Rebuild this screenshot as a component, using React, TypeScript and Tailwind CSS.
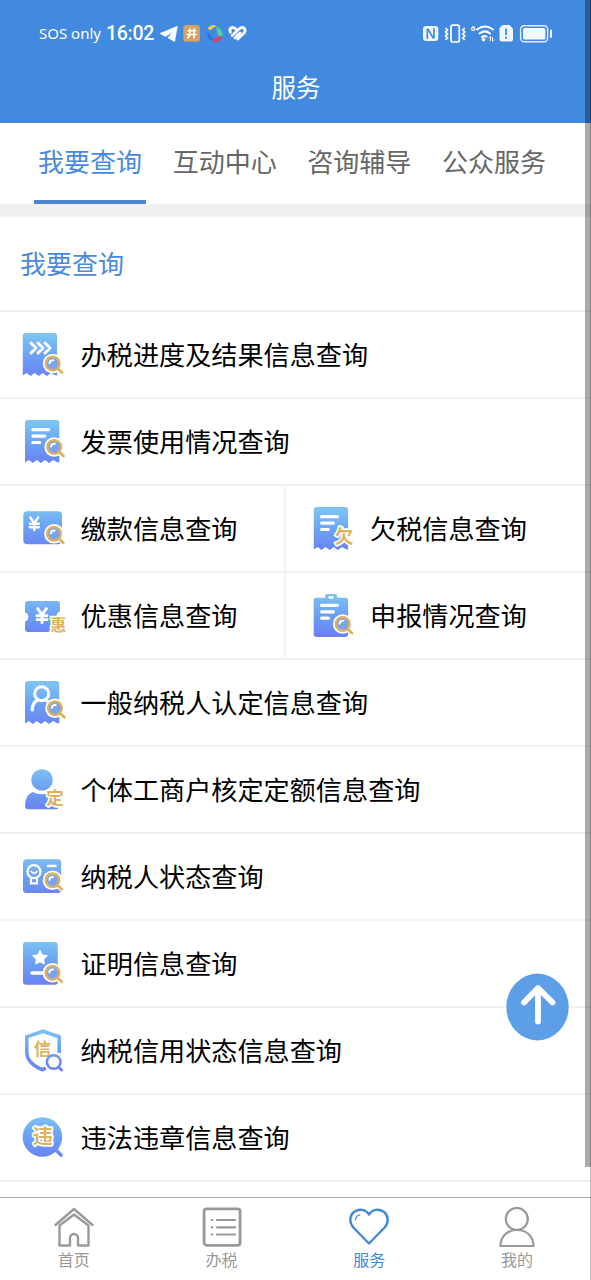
import type { ReactNode } from 'react';
import clsx from 'clsx';

const BLUE = 'url(#blue)';
const GOLD = '#e0b25f';

const GradientDefs = () => (
    <svg className="absolute size-0" aria-hidden="true">
        <defs>
            <linearGradient id="blue" gradientUnits="userSpaceOnUse" x1="22" y1="3" x2="22" y2="46">
                <stop offset="0" stopColor="#7cc3f2" />
                <stop offset="0.5" stopColor="#6b9ff4" />
                <stop offset="1" stopColor="#6a80f3" />
            </linearGradient>
        </defs>
    </svg>
);

const Icon = ({ children }: { children: ReactNode }) => (
    <svg className="h-[49px] w-12 shrink-0" viewBox="0 0 48 49" fill="none">
        {children}
    </svg>
);

const Magnifier = ({ x, y }: { x: number; y: number }) => (
    <g transform={`translate(${x} ${y})`} strokeLinecap="round">
        <circle r="9.8" fill="#fff" />
        <path d="M5.5 5.5 9.3 9" stroke="#fff" strokeWidth="5" />
        <circle r="6.9" fill="#7ba3ee" stroke={GOLD} strokeWidth="2.3" />
        <path d="M5.5 5.5 9.3 9" stroke={GOLD} strokeWidth="2.8" />
        <path d="M-3.2-.4A3.4 3.4 0 0 1 .6-3.2" stroke="#fff" strokeWidth="2" />
    </g>
);

const Receipt = ({ x = 5 }: { x?: number }) => (
    <path
        transform={`translate(${x} 3)`}
        fill={BLUE}
        d="M3 0h28.3a3 3 0 0 1 3 3v39.5l-2.6-.6-3.5-2-4.2 3-4-3-4.1 3-4.1-3-4 3-4-3L0 42.6V3a3 3 0 0 1 3-3z"
    />
);

const Lines = ({ x, y, widths }: { x: number; y: number; widths: number[] }) => (
    <g stroke="#fff" strokeWidth="3.2" strokeLinecap="round">
        {widths.map((w, i) => (
            <path key={i} d={`M${x + 1.6} ${y + i * 6.4}h${w - 3.2}`} />
        ))}
    </g>
);

const Yen = ({ x, y, scale = 1 }: { x: number; y: number; scale?: number }) => (
    <path
        transform={`translate(${x} ${y}) scale(${scale})`}
        d="M-3.8-6 0-.5 3.8-6M0-.5V6.3M-4.4.2h8.8M-4.4 3.6h8.8"
        stroke="#fff"
        strokeWidth="2.5"
        strokeLinecap="round"
    />
);

const Stamp = ({ x, y, size, children }: { x: number; y: number; size: number; children: string }) => (
    <text
        className="font-['Noto_Sans_CJK_SC',sans-serif] font-bold"
        x={x}
        y={y}
        fontSize={size}
        textAnchor="middle"
        fill={GOLD}
        stroke="#fff"
        strokeWidth="3.4"
        strokeLinejoin="round"
        paintOrder="stroke"
    >
        {children}
    </text>
);

const ProgressIcon = () => (
    <Icon>
        <Receipt x={2.8} />
        <path
            d="m11 13 5 5-5 5m7-10 5 5-5 5m7-10 5 5-5 5"
            stroke="#fff"
            strokeWidth="3"
            strokeLinecap="round"
            strokeLinejoin="round"
        />
        <Magnifier x={32.7} y={33.5} />
    </Icon>
);

const InvoiceIcon = () => (
    <Icon>
        <Receipt />
        <Lines x={11.3} y={12.7} widths={[19, 15, 10]} />
        <Magnifier x={34.2} y={30} />
    </Icon>
);

const PaymentIcon = () => (
    <Icon>
        <rect x="3.3" y="7.3" width="38.7" height="33" rx="4" fill={BLUE} />
        <Yen x={14.3} y={19.6} />
        <Magnifier x={34} y={29.7} />
    </Icon>
);

const DiscountIcon = () => (
    <Icon>
        <path
            d="M8 10h29a3 3 0 0 1 3 3v7.5c-4.5.5-4.5 9.5 0 10V38a3 3 0 0 1-3 3H8a3 3 0 0 1-3-3v-7.5c4.5-.5 4.5-8.500 0-9V13a3 3 0 0 1 3-3z"
            fill={BLUE}
        />
        <Yen x={22} y={24.5} scale={1.15} />
        <Stamp x={38.2} y={39.8} size={16}>惠</Stamp>
    </Icon>
);

const ArrearsIcon = () => (
    <Icon>
        <Receipt x={3.8} />
        <Lines x={10} y={12.7} widths={[19, 15, 10]} />
        <Stamp x={34} y={38.6} size={18.5}>欠</Stamp>
    </Icon>
);

const DeclareIcon = () => (
    <Icon>
        <path
            d="M6.5 6.7H15V5a2 2 0 0 1 2-2h8a2 2 0 0 1 2 2v1.7h8.3a2.8 2.8 0 0 1 2.8 2.8V43a3 3 0 0 1-3 3H6.7a3 3 0 0 1-3-3V9.5a2.8 2.8 0 0 1 2.8-2.8z"
            fill={BLUE}
        />
        <rect x="18.5" y="5.2" width="5" height="2.6" rx="1" fill="#fff" />
        <Lines x={10} y={14.4} widths={[19, 15, 10]} />
        <Magnifier x={32.7} y={33} />
    </Icon>
);

const TaxpayerIcon = () => (
    <Icon>
        <Receipt />
        <circle cx="21.7" cy="15.7" r="7" stroke="#fff" strokeWidth="3" />
        <path d="M12.2 32c.2-5.5 2.500-8.500 5.500-10M25.500 22l3 2" stroke="#fff" strokeWidth="3.2" strokeLinecap="round" />
        <Magnifier x={35} y={30.3} />
    </Icon>
);

const QuotaIcon = () => (
    <Icon>
        <circle cx="22" cy="14.9" r="10.7" fill={BLUE} />
        <path
            d="M13 27c5.500 3 12.500 3 18 0 5.500 1.500 8 6.500 8 14.200a3 3 0 0 1-3 3H8a3 3 0 0 1-3-3C5 33 8.500 28.500 13 27z"
            fill={BLUE}
        />
        <Stamp x={35} y={39.4} size={17.5}>定</Stamp>
    </Icon>
);

const StatusIcon = () => (
    <Icon>
        <rect x="3" y="7.3" width="38.2" height="33.7" rx="3.5" fill={BLUE} />
        <g stroke="#fff" strokeLinecap="round">
            <circle cx="14" cy="19.7" r="6.5" strokeWidth="2.3" />
            <path d="M11.2 19.5q2.800 3.600 5.600 0" strokeWidth="1.8" />
            <path d="M11 27v4.300h6V27" strokeWidth="2.2" />
            <path d="M28 14h7.5" strokeWidth="2.6" />
        </g>
        <Magnifier x={32.5} y={28.2} />
    </Icon>
);

const CertificateIcon = () => (
    <Icon>
        <rect x="3" y="3" width="34.8" height="42.8" rx="3" fill={BLUE} />
        <path
            d="m20 11.700 2.200 4.300 4.800.7-3.500 3.400.8 4.700-4.300-2.200-4.300 2.200.8-4.700-3.500-3.400 4.800-.7z"
            fill="#fff"
            stroke="#fff"
            strokeWidth="1.2"
            strokeLinejoin="round"
        />
        <path d="M12 34h12" stroke="#fff" strokeWidth="3.4" strokeLinecap="round" />
        <Magnifier x={32.5} y={33.7} />
    </Icon>
);

const CreditIcon = () => (
    <Icon>
        <path
            d="M39.2 27V10.7L23 5.2 6.800 10.700V26c0 8.500 6 13.800 15.500 17.700l3.500-1.700"
            stroke={BLUE}
            strokeWidth="3.6"
        />
        <Stamp x={22.5} y={28.5} size={17.5}>信</Stamp>
        <circle cx="33.7" cy="36" r="6.8" fill="#fff" stroke={BLUE} strokeWidth="2.6" />
        <path d="m38.500 41 3 3" stroke={BLUE} strokeWidth="3" strokeLinecap="round" />
    </Icon>
);

const ViolationIcon = () => (
    <Icon>
        <circle cx="22.4" cy="24" r="19.8" fill={BLUE} />
        <path d="m35 36 6 6" stroke={BLUE} strokeWidth="3.6" strokeLinecap="round" />
        <Stamp x={22.8} y={31.3} size={20}>违</Stamp>
    </Icon>
);

const rows = [
    [{ label: '办税进度及结果信息查询', icon: <ProgressIcon /> }],
    [{ label: '发票使用情况查询', icon: <InvoiceIcon /> }],
    [
        { label: '缴款信息查询', icon: <PaymentIcon /> },
        { label: '欠税信息查询', icon: <ArrearsIcon /> },
    ],
    [
        { label: '优惠信息查询', icon: <DiscountIcon /> },
        { label: '申报情况查询', icon: <DeclareIcon /> },
    ],
    [{ label: '一般纳税人认定信息查询', icon: <TaxpayerIcon /> }],
    [{ label: '个体工商户核定定额信息查询', icon: <QuotaIcon /> }],
    [{ label: '纳税人状态查询', icon: <StatusIcon /> }],
    [{ label: '证明信息查询', icon: <CertificateIcon /> }],
    [{ label: '纳税信用状态信息查询', icon: <CreditIcon /> }],
    [{ label: '违法违章信息查询', icon: <ViolationIcon /> }],
];

const tabs = ['我要查询', '互动中心', '咨询辅导', '公众服务'];

const navItems = [
    {
        label: '首页',
        icon: (
            <>
                <path d="M1.500 18 20 2l18.500 16" strokeWidth="2.4" />
                <path d="M5.500 18.500V38.500H16V31a4 4 0 0 1 8 0v7.500h10.500v-20L20 7.500z" strokeWidth="2.4" />
            </>
        ),
    },
    {
        label: '办税',
        icon: (
            <>
                <rect x="2.1" y="1.8" width="36" height="36.5" rx="2.5" strokeWidth="2.8" />
                <path d="M15 13h18M15 20.300h18M15 27.500h18M9.800 13h.5M9.800 20.300h.5M9.800 27.500h.5" strokeWidth="2.2" />
            </>
        ),
    },
    {
        label: '服务',
        icon: (
            <>
                <path
                    d="M20 36.500 4.800 21C-.5 15 .8 8 5.200 4.800 10 1.500 16.500 2 20 7.500 23.500 2 30 1.500 34.800 4.800 39.200 8 40.500 15 35.200 21z"
                    strokeWidth="2.4"
                />
                <path d="M6.500 12.800a5.500 5.500 0 0 1 4.300-5" strokeWidth="1.2" />
            </>
        ),
    },
    {
        label: '我的',
        icon: (
            <>
                <circle cx="19.8" cy="12" r="11" strokeWidth="2.2" />
                <path d="M3.500 39h33c0-9.500-6.500-16-16.500-16S3.500 29.500 3.500 39z" strokeWidth="2.2" />
            </>
        ),
    },
];

const StatusBar = () => (
    <div className="flex h-[67px] items-center pl-[39px] pr-[38px] text-white">
        <span className="w-[67px] whitespace-nowrap font-['Noto_Sans',sans-serif] text-[15px]">SOS only</span>
        <span className="w-[54px] font-['Roboto',sans-serif] text-[19.5px] font-medium tracking-[-0.3px]">16:02</span>
        <svg className="h-5 w-[88px]" viewBox="160 24 88 20" fill="none">
            <path d="M160 33.500 177.300 26.300 174.600 41.500l-6.600-3.700 5-6.300-7.500 5z" fill="#fff" stroke="#fff" strokeWidth=".6" strokeLinejoin="round" />
            <rect x="183.3" y="25" width="16.6" height="16.7" rx="3" fill="#d1a264" />
            <path
                d="M187.200 30.800h9M186.500 34.500h10.500M189.800 28.200v5.500q0 3.200-2.500 4.500M194 28.200v10.300"
                stroke="#fff"
                strokeWidth="1.5"
            />
            <path d="M207.500 28.500q2.500-4 7-3.500l2.500 1.500q-4 .5-6.500 4z" fill="#f3c65b" />
            <path d="M216.500 26q6.500 3 6.300 9.500l-3.300 1.500q-3.500-4.500-3-11z" fill="#4fcf9c" />
            <path d="M222.500 36q-2 6-8.500 6.300l-1-2.300q3-3.500 9.500-4z" fill="#e83c5d" />
            <path d="M207.500 30q-1.500 7.500 4 11l2.500-2.500q-4.500-3-6.500-8.500z" fill="#3470e8" />
            {/* striped heart */}
            <g stroke="#fff" strokeWidth="2.8" strokeLinecap="round">
                <path d="M230.500 32.300q-1.500-3.300.8-4.500 2.200-1 4.500 1.200" />
                <path d="m232.300 35.500 6.700-6.500q3-2.700 5.300-.6 1.900 2.300-.8 5.100l-5.700 5.600" />
                <path d="m235 38 5-5" />
            </g>
        </svg>
        <svg className="ml-auto h-[22px] w-[131px]" viewBox="422 23 131 22" fill="none">
            <rect x="423" y="26" width="15.3" height="15" rx="3" fill="#f0f6fd" />
            <path
                d="M427.300 39V30q0-1.500 1.200-.3l4.300 7.800q1.200 1.200 1.200-.3V28"
                stroke="#428ae0"
                strokeWidth="1.7"
            />
            <rect x="451" y="25.2" width="8.3" height="16.8" rx="2" stroke="#fff" strokeWidth="1.7" />
            <path
                d="m445.500 28 2 2-2 2 2 2-2 2 2 2-2 2M464.800 28l-2 2 2 2-2 2 2 2-2 2 2 2"
                stroke="#fff"
                strokeWidth="1.7"
            />
            <text className="font-['Roboto',sans-serif] font-bold" x="470.8" y="31.3" fontSize="8" fill="#fff">
                6
            </text>
            <path
                d="M477 29.500q8-6 16 0M479.500 33.500q5.500-4.300 10.500 0M482 37q2.500-2 4.500-.3"
                stroke="#fff"
                strokeWidth="2"
                strokeLinecap="round"
            />
            <circle cx="483.5" cy="39.600" r="1.800" fill="#fff" />
            <path d="M490.500 41v-4.500l-1.500 1.800M492.500 37v4.500l1.500-1.800" stroke="#fff" strokeWidth="1" />
            <path
                d="M502.500 25h7l3.500 3.700V39a2.500 2.500 0 0 1-2.500 2.500h-8.500a2.500 2.500 0 0 1-2.500-2.500V28z"
                fill="#f0f6fd"
            />
            <path d="M506 28.500v6.500M506 36.800v2" stroke="#428ae0" strokeWidth="1.8" />
            <rect x="520.6" y="25.7" width="27" height="16" rx="3.5" stroke="#e4effb" strokeWidth="1.4" />
            <rect x="523" y="28" width="22.3" height="11.4" rx="1.5" fill="#f3f8fe" />
            <path d="M551 30.500v6.500" stroke="#fff" strokeWidth="1.8" strokeLinecap="round" />
        </svg>
    </div>
);

const App = () => {
    return (
        <div className="relative flex h-[1280px] w-full flex-col overflow-hidden bg-white font-['Noto_Sans_CJK_SC',sans-serif]">
            <GradientDefs />
            <header className="h-[123px] shrink-0 bg-[#428ae0] text-white">
                <StatusBar />
                <h1 className="pl-px text-center text-[24.5px] leading-[40px]">服务</h1>
            </header>

            <nav className="flex h-[81px] shrink-0 justify-between pl-[34px] pr-[41px]">
                {tabs.map((tab, i) => (
                    <button
                        key={tab}
                        className={clsx(
                            'flex w-28 justify-center border-b-4 text-[26px] leading-[75px]',
                            i === 0 ? 'border-[#4b87d2] text-[#4a8ada]' : 'border-transparent text-[#666]'
                        )}
                    >
                        {tab}
                    </button>
                ))}
            </nav>
            <div className="h-[13px] shrink-0 bg-[#f0f0f0]" />

            <main className="min-h-0 flex-1 overflow-hidden">
                <h2 className="h-[95px] border-b-2 border-[#f1f1f1] pl-5 text-[26px] leading-[91px] text-[#4a8ada]">
                    我要查询
                </h2>
                {rows.map((row) => (
                    <div className="flex h-[87px] border-b-2 border-[#f1f1f1]" key={row[0].label}>
                        {row.map((item, i) => (
                            <div
                                className={clsx(
                                    'flex items-center gap-3',
                                    row.length === 1 && 'w-full pl-5',
                                    row.length > 1 && i === 0 && 'w-[286px] border-r-2 border-[#f4f4f4] pl-5',
                                    i === 1 && 'flex-1 pl-6'
                                )}
                                key={item.label}
                            >
                                {item.icon}
                                <span
                                    className={clsx(
                                        'whitespace-nowrap pt-px text-[26.15px] text-black',
                                        i === 0 && 'pl-[0.6px]'
                                    )}
                                >
                                    {item.label}
                                </span>
                            </div>
                        ))}
                    </div>
                ))}
            </main>

            <footer className="grid h-[83px] shrink-0 grid-cols-4 border-t border-[#a9a9a9] bg-white">
                {navItems.map((item) => (
                    <button
                        key={item.label}
                        className={clsx(
                            'flex flex-col items-center pt-[9px]',
                            item.label === '服务' ? 'text-[#4488d8]' : 'text-[#999]'
                        )}
                    >
                        <svg
                            className="h-10 w-10 shrink-0"
                            viewBox="0 0 40 40"
                            fill="none"
                            stroke="currentColor"
                            strokeLinecap="round"
                            strokeLinejoin="round"
                        >
                            {item.icon}
                        </svg>
                        <span className="text-base leading-[25px]">{item.label}</span>
                    </button>
                ))}
            </footer>

            {/* back to top */}
            <button className="absolute right-[22px] top-[973px]">
                <svg className="h-[68px] w-[63px]" viewBox="0 0 63 68" fill="none">
                    <ellipse cx="31.5" cy="34" rx="31.2" ry="33.4" fill="#5c9fe7" />
                    <path
                        d="M18 29.500 32 15l14.500 14.500M32 15.500V48.500"
                        stroke="#fff"
                        strokeWidth="5.8"
                        strokeLinecap="round"
                        strokeLinejoin="round"
                    />
                </svg>
            </button>

            {/* scrollbar */}
            <div className="absolute right-0 top-0 h-[1167px] w-1.5 bg-black/33" />
            <div className="absolute right-0 top-0 h-full w-px bg-black/25" />
        </div>
    );
};

export default App;
